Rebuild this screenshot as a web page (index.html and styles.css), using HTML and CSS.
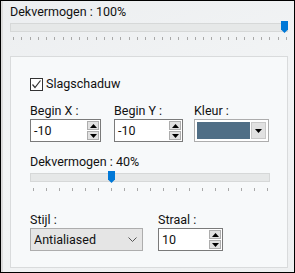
FILE: index.html
```html
<!DOCTYPE html>
<html>
<head>
<meta charset="utf-8">
<link rel="stylesheet" href="styles.css">
</head>
<body>
<div class="window">
  <div class="lbl top-lbl">Dekvermogen : 100%</div>
  <div class="slider slider-wide">
    <div class="track"></div>
    <svg class="thumb thumb-end" width="7" height="12" viewBox="0 0 7 12"><path d="M0 0H7V8.5L3.5 12L0 8.5Z" fill="#0078d7"/></svg>
  </div>
  <div class="ticks ticks-wide">
    <i></i><i></i><i></i><i></i><i></i><i></i><i></i><i></i><i></i><i></i><i></i><i></i><i></i><i></i><i></i><i></i><i></i><i></i><i></i><i></i><i></i><i></i><i></i><i></i><i></i><i></i><i></i><i></i><i></i><i></i><i></i><i></i><i></i><i></i>
  </div>

  <div class="group">
    <label class="check-row">
      <span class="checkbox"><svg width="11" height="11" viewBox="0 0 11 11"><path d="M1.5 5.5L4 8.5L9.5 1.5" fill="none" stroke="#333" stroke-width="1.2"/></svg></span>
      <span class="lbl">Slagschaduw</span>
    </label>

    <div class="row fields">
      <div class="field f-x">
        <div class="lbl">Begin X :</div>
        <div class="spin">
          <span class="val">-10</span>
          <span class="btns">
            <span class="sb"><svg width="7" height="4" viewBox="0 0 7 4"><path d="M0 4L3.5 0L7 4Z" fill="#000"/></svg></span>
            <span class="sb"><svg width="7" height="4" viewBox="0 0 7 4"><path d="M0 0L3.5 4L7 0Z" fill="#000"/></svg></span>
          </span>
        </div>
      </div>
      <div class="field f-y">
        <div class="lbl">Begin Y :</div>
        <div class="spin">
          <span class="val">-10</span>
          <span class="btns">
            <span class="sb"><svg width="7" height="4" viewBox="0 0 7 4"><path d="M0 4L3.5 0L7 4Z" fill="#000"/></svg></span>
            <span class="sb"><svg width="7" height="4" viewBox="0 0 7 4"><path d="M0 0L3.5 4L7 0Z" fill="#000"/></svg></span>
          </span>
        </div>
      </div>
      <div class="field f-c">
        <div class="lbl">Kleur :</div>
        <div class="color-pick">
          <span class="swatch"></span>
          <span class="drop"><svg width="7" height="4" viewBox="0 0 7 4"><path d="M0 0L3.5 4L7 0Z" fill="#000"/></svg></span>
        </div>
      </div>
    </div>

    <div class="lbl mid-lbl">Dekvermogen : 40%</div>
    <div class="slider slider-narrow">
      <div class="track"></div>
      <svg class="thumb thumb-40" width="7" height="12" viewBox="0 0 7 12"><path d="M0 0H7V8.5L3.5 12L0 8.5Z" fill="#0078d7"/></svg>
    </div>
    <div class="ticks ticks-narrow">
      <i></i><i></i><i></i><i></i><i></i><i></i><i></i><i></i><i></i><i></i><i></i><i></i><i></i><i></i><i></i><i></i><i></i><i></i><i></i>
    </div>

    <div class="row bottom">
      <div class="field f-style">
        <div class="lbl">Stijl :</div>
        <div class="select">
          <span class="val">Antialiased</span>
          <svg width="9" height="5" viewBox="0 0 9 5"><path d="M0.5 0.5L4.5 4.5L8.5 0.5" fill="none" stroke="#555" stroke-width="1"/></svg>
        </div>
      </div>
      <div class="field f-r">
        <div class="lbl">Straal :</div>
        <div class="spin">
          <span class="val">10</span>
          <span class="btns">
            <span class="sb"><svg width="7" height="4" viewBox="0 0 7 4"><path d="M0 4L3.5 0L7 4Z" fill="#000"/></svg></span>
            <span class="sb"><svg width="7" height="4" viewBox="0 0 7 4"><path d="M0 0L3.5 4L7 0Z" fill="#000"/></svg></span>
          </span>
        </div>
      </div>
    </div>
  </div>
</div>
</body>
</html>
```

FILE: styles.css
```css
* { box-sizing: border-box; }
html, body { margin: 0; padding: 0; }
body {
  font-family: Roboto, "Noto Sans", sans-serif;
  font-size: 12.5px;
  color: #111;
}
.window {
  width: 295px;
  height: 273px;
  border: 1px solid #000;
  background: linear-gradient(160deg, #eceef0 0%, #f2f4f5 45%, #eef0f1 100%);
  box-shadow: inset 2px 0 0 #dcdcdc;
  padding: 2px 6px 0 9px;
  display: flex;
  flex-direction: column;
}
.lbl {
  line-height: 16px;
  white-space: nowrap;
}
.top-lbl { margin-top: 1px; }
.slider {
  position: relative;
  height: 12px;
}
.track {
  height: 9px;
  background: #e6e8e8;
  border: 1px solid #d6d8d8;
}
.thumb { position: absolute; top: -2px; }
.slider-wide { margin-top: 3px; }
.thumb-end { right: 0; }
.slider-narrow { margin-top: 3px; width: 240px; }
.thumb-40 { left: 78px; }
.ticks {
  display: flex;
  justify-content: space-between;
  height: 3px;
}
.ticks i { width: 1px; height: 3px; background: #a9a9a9; }
.ticks-wide { margin: 2px 1px 0 3px; }
.ticks-narrow { margin: 3px 0 0 3px; width: 235px; }

.group {
  margin-top: 16px;
  height: 212px;
  border: 1px solid #d9dbdc;
  background: #f7f9fa;
  padding: 19px 0 0 19px;
  display: flex;
  flex-direction: column;
}
.check-row {
  display: flex;
  align-items: center;
  gap: 3px;
  height: 16px;
}
.checkbox {
  width: 13px;
  height: 13px;
  border: 1px solid #333;
  background: #fff;
  display: flex;
  align-items: center;
  justify-content: center;
}
.row { display: flex; }
.fields { margin-top: 11px; }
.f-x { width: 71px; margin-right: 13px; }
.f-y { width: 69px; margin-right: 11px; }
.f-c { width: 75px; }
.spin {
  height: 23px;
  border: 1px solid #7a7a7a;
  background: #fff;
  display: flex;
  align-items: center;
  justify-content: space-between;
  padding: 0 1px 0 3px;
}
.val { line-height: 16px; }
.btns { display: flex; flex-direction: column; gap: 1px; }
.sb {
  width: 12px;
  height: 9px;
  border: 1px solid #adadad;
  background: #e1e1e1;
  display: flex;
  align-items: center;
  justify-content: center;
}
.color-pick {
  height: 23px;
  border: 1px solid #adadad;
  background: #fff;
  padding: 2px;
  display: flex;
  gap: 1px;
}
.swatch { flex: 1; background: #4f6e86; }
.drop {
  width: 15px;
  background: #e1e1e1;
  border: 1px solid #c8c8c8;
  display: flex;
  align-items: center;
  justify-content: center;
}
.mid-lbl { margin-top: 12px; }
.bottom { margin-top: 21px; }
.f-style { width: 113px; margin-right: 15px; }
.f-r { width: 65px; }
.select {
  height: 23px;
  border: 1px solid #adadad;
  background: #e5e5e5;
  display: flex;
  align-items: center;
  justify-content: space-between;
  padding: 0 5px 0 3px;
}
```
